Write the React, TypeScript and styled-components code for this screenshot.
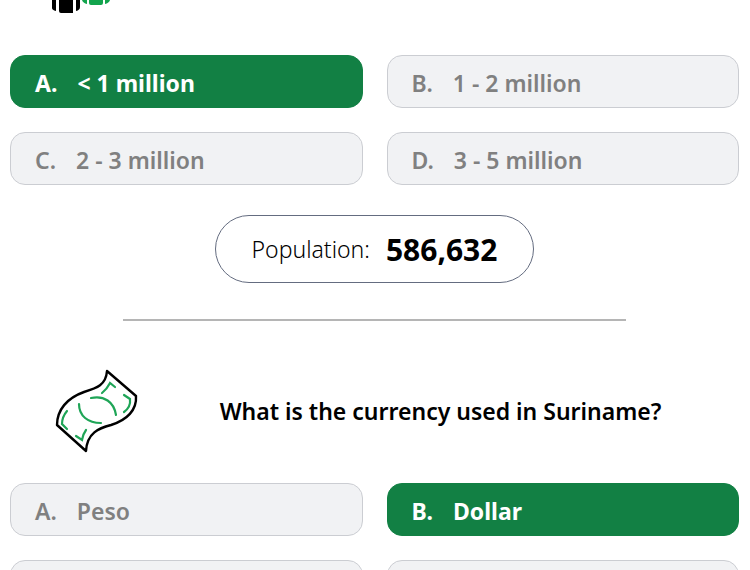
import React from "react";
import styled, { createGlobalStyle, css } from "styled-components";

const GlobalStyle = createGlobalStyle`
  *, *::before, *::after { box-sizing: border-box; }
  body {
    margin: 0;
    background: #ffffff;
    color: #000000;
    font-family: "Segoe UI", "Noto Sans", "Open Sans", sans-serif;
  }
  svg { display: block; }
`;

const Page = styled.main`
  height: 100vh;
  overflow: hidden;
  padding: 0 11px 0 10px;
`;

const QuestionTail = styled.header`
  padding-left: 40px;
  height: 55px;
`;

const QuestionHeader = styled.header`
  display: grid;
  grid-template-columns: 172px 1fr;
  align-items: center;
  height: 162px;
  padding-top: 18px;
`;

const IconSlot = styled.div`
  display: flex;
  justify-content: center;
`;

const QuestionTitle = styled.h2`
  margin: 0;
  padding-right: 40px;
  text-align: center;
  font-size: 23px;
  line-height: 32px;
  font-weight: 600;
`;

const Answers = styled.div`
  display: grid;
  grid-template-columns: 1fr 1fr;
  gap: 24px;
`;

const Answer = styled.button<{ $correct?: boolean }>`
  display: flex;
  align-items: center;
  gap: 20px;
  height: 53px;
  padding: 2px 24px 0;
  border: 1px solid #cbcdd2;
  border-radius: 15px;
  background: #f1f2f4;
  color: #808080;
  font-family: inherit;
  font-size: 23px;
  line-height: 32px;
  font-weight: 600;
  text-align: left;
  ${({ $correct }) =>
    $correct &&
    css`
      border-color: #128044;
      background: #128044;
      color: #ffffff;
      font-weight: 700;
    `}
`;

const Result = styled.p`
  display: flex;
  align-items: center;
  justify-content: center;
  gap: 16px;
  width: fit-content;
  height: 68px;
  margin: 30px auto 0;
  padding: 0 36px;
  border: 1px solid #646c80;
  border-radius: 34px;
`;

const ResultLabel = styled.span`
  font-size: 23px;
  font-weight: 300;
`;

const ResultValue = styled.strong`
  font-size: 30px;
  font-weight: 700;
`;

const Divider = styled.hr`
  width: 69%;
  height: 2px;
  margin: 36px auto 0;
  border: 0;
  background: #b5b5b5;
`;

const PeopleIcon = () => (
  <svg width="64" height="14" viewBox="0 0 64 14" aria-hidden="true">
    <path d="M2 0h4v11Q2 10 2 8ZM9 0h14v13H11Q9 13 9 11ZM26 0h4v7q0 3-4 4Z" fill="#000" />
    <path d="M32 0h5v4Q33 3 32 0ZM39 0h14v3q0 2-2 2H41q-2 0-2-2ZM55 0h5q-1 3-5 4Z" fill="#12a44d" />
  </svg>
);

const BanknoteIcon = () => (
  <svg width="84" height="86" viewBox="0 0 84 86" fill="none" aria-hidden="true">
    <path
      d="M53 3 82 28C83 42 73 52 57 57C45 60 33 65 32 83L3 57C3 42 13 30 30 24C43 20 52 17 53 3Z"
      stroke="#000"
      strokeWidth="2.4"
      strokeLinejoin="round"
    />
    <path
      d="M37 30C50 27 60 34 62 47M25 36C25 48 34 55 47 55M48 25Q53 21 56 15L61 19M70 27 76 31Q77 39 70 44M13 43Q8 49 8 56L13 61M22 68 28 72Q29 66 32 62"
      stroke="#1fa557"
      strokeWidth="2.2"
      strokeLinecap="round"
    />
  </svg>
);

type Option = { letter: string; text?: string; correct?: boolean };

const populationOptions: Option[] = [
  { letter: "A.", text: "< 1 million", correct: true },
  { letter: "B.", text: "1 - 2 million" },
  { letter: "C.", text: "2 - 3 million" },
  { letter: "D.", text: "3 - 5 million" },
];

const currencyOptions: Option[] = [
  { letter: "A.", text: "Peso" },
  { letter: "B.", text: "Dollar", correct: true },
  { letter: "C." },
  { letter: "D." },
];

const AnswerGrid = ({ options }: { options: Option[] }) => (
  <Answers>
    {options.map(({ letter, text, correct }) => (
      <Answer
        key={letter}
        type="button"
        $correct={correct}
        aria-label={text ? undefined : `Answer ${letter}`}
      >
        {text && (
          <>
            <span>{letter}</span>
            <span>{text}</span>
          </>
        )}
      </Answer>
    ))}
  </Answers>
);

export default function App() {
  return (
    <>
      <GlobalStyle />
      <Page>
        <section>
          <QuestionTail>
            <PeopleIcon />
          </QuestionTail>
          <AnswerGrid options={populationOptions} />
          <Result>
            <ResultLabel>Population:</ResultLabel>
            <ResultValue>586,632</ResultValue>
          </Result>
        </section>
        <Divider />
        <section>
          <QuestionHeader>
            <IconSlot>
              <BanknoteIcon />
            </IconSlot>
            <QuestionTitle>What is the currency used in Suriname?</QuestionTitle>
          </QuestionHeader>
          <AnswerGrid options={currencyOptions} />
        </section>
      </Page>
    </>
  );
}
